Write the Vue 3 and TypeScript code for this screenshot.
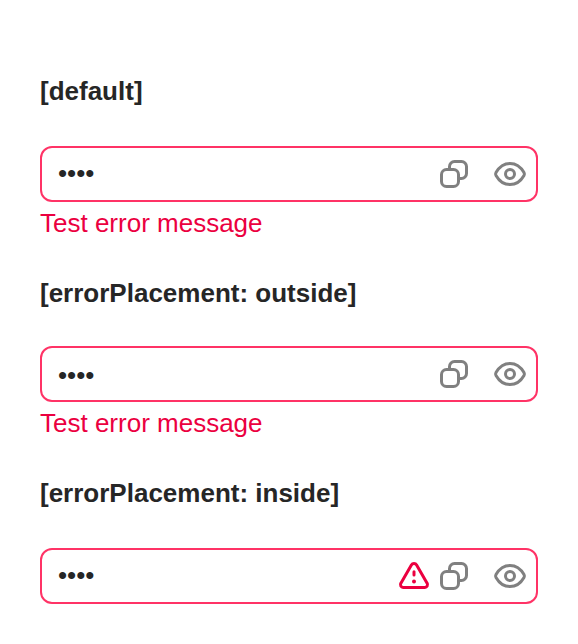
<script setup lang="ts">
interface Field {
  title: string
  outside: boolean
}
const fields: Field[] = [
  { title: '[default]', outside: true },
  { title: '[errorPlacement: outside]', outside: true },
  { title: '[errorPlacement: inside]', outside: false },
]
</script>

<template>
  <main class="page">
    <section v-for="(f, i) in fields" :key="f.title" class="group" :class="'group-' + i">
      <h4 class="title">{{ f.title }}</h4>
      <div class="field">
        <span class="dots">••••</span>
        <svg v-if="!f.outside" class="icon warn" viewBox="0 0 32 32">
          <path d="M13.4 4.9 2.9 23.2A2.7 2.7 0 0 0 5.3 27.4H26.7A2.7 2.7 0 0 0 29.1 23.2L18.6 4.9A3 3 0 0 0 13.4 4.9Z" />
          <path d="M16 11.7V15" />
          <circle class="solid" cx="16" cy="21.5" r="2" />
        </svg>
        <svg class="icon copy" viewBox="0 0 32 32">
          <path d="M11.5 11.5V8.5A5 5 0 0 1 16.5 3.5H23.5A5 5 0 0 1 28.5 8.5V15.5A5 5 0 0 1 23.5 20.5H20.5" />
          <rect x="3.5" y="11.5" width="17" height="17" rx="5" />
        </svg>
        <svg class="icon eye" viewBox="0 0 32 32">
          <path d="M2 14.6C5.3 8.8 10 5.5 16 5.5S26.7 8.8 30 14.6Q30.7 16 30 17.4C26.7 23.2 22 26.5 16 26.5S5.3 23.2 2 17.4Q1.3 16 2 14.6Z" />
          <circle cx="16" cy="16" r="4.5" />
        </svg>
      </div>
      <p v-if="f.outside" class="error">Test error message</p>
    </section>
  </main>
</template>

<style>
body { margin: 0; background: #fff; }
</style>
<style scoped>
.page {
  box-sizing: border-box;
  height: 644px;
  padding: 76px 40px 0;
  font-family: "Liberation Sans", Arial, sans-serif;
  font-size: 26px;
  line-height: 30px;
}
.group-0 { height: 202px; }
.group-1 { height: 200px; }
.title { margin: 0 0 40px; font-size: 26px; font-weight: 700; color: #262626; }
.group-1 .title { margin-bottom: 38px; }
.field {
  box-sizing: border-box;
  display: flex;
  align-items: center;
  height: 56px;
  padding: 0 10px 0 16px;
  border: 2px solid #ff3366;
  border-radius: 12px;
}
.dots { margin-right: auto; padding-bottom: 2px; color: #262626; }
.group-1 .dots { padding: 2px 0 0; }
.icon { width: 32px; height: 32px; fill: none; stroke: #808080; stroke-width: 3; stroke-linecap: butt; stroke-linejoin: round; }
.warn { stroke: #eb003f; stroke-linecap: round; margin-right: 8px; }
.solid { fill: #eb003f; stroke: none; }
.copy { margin-right: 24px; }
.error { margin: 6px 0 0; color: #eb003f; }
</style>
